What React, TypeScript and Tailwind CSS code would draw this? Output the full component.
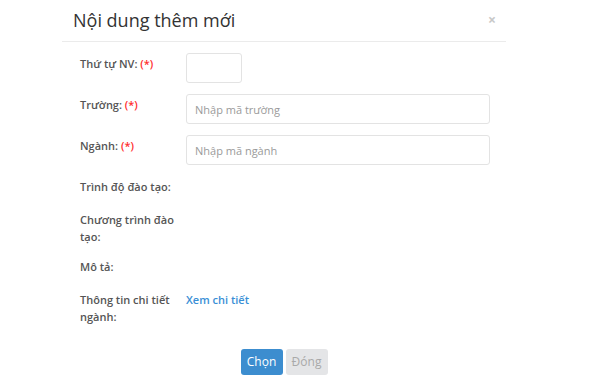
import React from "react";

const font = { fontFamily: '"Open Sans", "Noto Sans", sans-serif' };

function Label({ children, req }: { children: React.ReactNode; req?: boolean }) {
  return (
    <div className="w-[106px] shrink-0 pr-[12px] pt-[2px] text-[11px] leading-[17px] font-semibold text-[#555]">
      {children}
      {req && <span className="text-[#ff2d2d]"> (*)</span>}
    </div>
  );
}

export default function App() {
  return (
    <div className="w-[600px] h-[389px] bg-white overflow-hidden" style={font}>
      <div className="ml-[62px] w-[444px]">
        <div className="flex items-start justify-between pl-[11px] pr-[10px] pt-[7px] pb-[8px] border-b border-[#ebebeb]">
          <div className="text-[18px] leading-[26px] text-[#333]">Nội dung thêm mới</div>
          <div className="text-[14px] leading-[26px] text-[#c8c8c8] font-bold">×</div>
        </div>
        <div className="pl-[18px] pt-[11px] flex flex-col gap-[11px]">
          <div className="flex items-start">
            <Label req>Thứ tự NV:</Label>
            <input className="w-[56px] h-[30px] border border-[#e3e3e3] rounded-[3px] outline-none" />
          </div>
          <div className="flex items-start">
            <Label req>Trường:</Label>
            <input
              placeholder="Nhập mã trường"
              className="w-[304px] h-[30px] border border-[#e3e3e3] rounded-[3px] px-[8px] text-[11px] text-[#555] placeholder:text-[#9a9a9a] outline-none"
            />
          </div>
          <div className="flex items-start">
            <Label req>Ngành:</Label>
            <input
              placeholder="Nhập mã ngành"
              className="w-[304px] h-[30px] border border-[#e3e3e3] rounded-[3px] px-[8px] text-[11px] text-[#555] placeholder:text-[#9a9a9a] outline-none"
            />
          </div>
          <div className="flex items-start min-h-[22px]">
            <Label>Trình độ đào tạo:</Label>
          </div>
          <div className="flex items-start min-h-[22px]">
            <Label>Chương trình đào tạo:</Label>
          </div>
          <div className="flex items-start min-h-[22px]">
            <Label>Mô tả:</Label>
          </div>
          <div className="flex items-start min-h-[22px]">
            <Label>Thông tin chi tiết ngành:</Label>
            <a className="pt-[2px] text-[11px] leading-[17px] font-semibold text-[#3a8fd6] cursor-pointer">Xem chi tiết</a>
          </div>
        </div>
        <div className="flex justify-center gap-[3px] mt-[24px]">
          <button className="w-[42px] h-[26px] rounded-[3px] bg-[#3c8dcf] text-white text-[12px]">Chọn</button>
          <button className="w-[42px] h-[26px] rounded-[3px] bg-[#e4e5e7] text-[#a9a9a9] text-[12px]">Đóng</button>
        </div>
      </div>
    </div>
  );
}
